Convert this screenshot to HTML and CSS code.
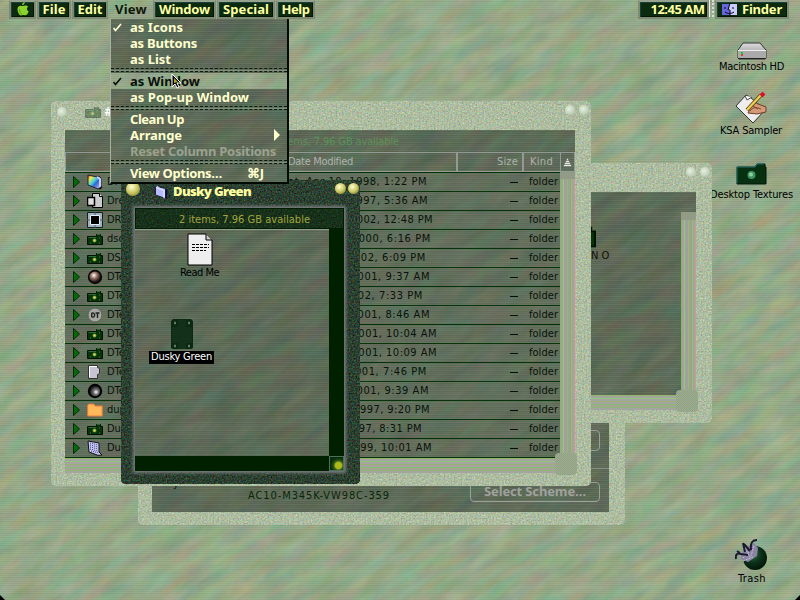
FILE: index.html
```html
<!DOCTYPE html>
<html lang="en">
<head>
<meta charset="utf-8">
<title>Finder</title>
<link rel="stylesheet" href="styles.css">
</head>
<body>
<svg class="defs" width="0" height="0">
  <defs>
    <filter id="moss" x="0" y="0" width="100%" height="100%" color-interpolation-filters="sRGB">
      <feTurbulence type="fractalNoise" baseFrequency="0.028 0.08" numOctaves="4" seed="7"/>
      <feColorMatrix values=".24 .03 0 0 .455  0 .15 0 0 .59  0 .08 .14 0 .43  0 0 0 0 1"/>
    </filter>
    <filter id="shade" x="0" y="0" width="100%" height="100%" color-interpolation-filters="sRGB">
      <feTurbulence type="fractalNoise" baseFrequency="0.028 0.08" numOctaves="4" seed="4"/>
      <feColorMatrix values=".14 .02 0 0 .28  0 .11 0 0 .355  0 .05 .08 0 .275  0 0 0 0 1"/>
    </filter>
    <filter id="pale" x="0" y="0" width="100%" height="100%" color-interpolation-filters="sRGB">
      <feTurbulence type="fractalNoise" baseFrequency="0.6" numOctaves="3" seed="3"/>
      <feColorMatrix values=".42 .1 0 0 .42  0 .36 0 0 .56  0 .12 .4 0 .37  0 0 0 0 1"/>
    </filter>
    <filter id="dusk" x="0" y="0" width="100%" height="100%" color-interpolation-filters="sRGB">
      <feTurbulence type="fractalNoise" baseFrequency="0.6" numOctaves="3" seed="9"/>
      <feColorMatrix values=".5 0 0 0 -.08  0 .5 0 0 0  0 .15 .45 0 -.11  0 0 0 0 1"/>
    </filter>
    <linearGradient id="metal" x1="0" y1="0" x2="0" y2="1"><stop offset="0" stop-color="#ddd"/><stop offset="1" stop-color="#888"/></linearGradient>
    <radialGradient id="ball" cx=".4" cy=".35" r=".6"><stop offset="0" stop-color="#fff"/><stop offset=".45" stop-color="#9a7a6c"/><stop offset="1" stop-color="#1c1210"/></radialGradient>
    <radialGradient id="ball2" cx=".6" cy=".6" r=".6"><stop offset="0" stop-color="#fff"/><stop offset=".4" stop-color="#777"/><stop offset="1" stop-color="#111"/></radialGradient>
    <radialGradient id="orb" cx=".4" cy=".35" r=".7"><stop offset="0" stop-color="#2d7144"/><stop offset=".5" stop-color="#0b3219"/><stop offset="1" stop-color="#021206"/></radialGradient>
    <linearGradient id="rainbow" x1="0" y1="0" x2="1" y2="1"><stop offset="0" stop-color="#e33"/><stop offset=".2" stop-color="#ee4"/><stop offset=".45" stop-color="#4cd"/><stop offset=".6" stop-color="#36c"/><stop offset="1" stop-color="#ccf"/></linearGradient>
    <symbol id="camera" viewBox="0 0 16 12"><path d="M.5 3.500h9v-2h4v2h2v8H.5z" fill="#063408" stroke="#010"/><path d="M1.500 4.500H9M10 1.500h3" stroke="#2b6a35"/><circle cx="7.500" cy="7.500" r="2" fill="#5f8a2c"/><path d="M6.500 6.500h2v2h-2z" fill="#e8e070"/><path d="M3 10h1M12 10h1M12 5h1" stroke="#3e8540"/></symbol>
    <symbol id="pages" viewBox="0 0 16 16"><path d="M5.500.5h7l3 3v11h-10z" fill="#ccc" stroke="#000"/><path d="M12.500.5v3h3" fill="#fff" stroke="#000"/><path d="M.5 4.500h7v8h-7z" fill="#ddd" stroke="#000" stroke-width="1.500"/></symbol>
    <symbol id="frame" viewBox="0 0 16 16"><path d="M.5.5h15v15H.5z" fill="#9eb1bf" stroke="#151d22"/><path d="M8 0v16M0 8h16" stroke="#4a5a68"/><path d="M3.500 3.500h9v9h-9z" fill="#000" stroke="#e3edf5"/></symbol>
    <symbol id="prism" viewBox="0 0 16 16"><path d="M1 1l9 2 2-1 2 2v10l-3 1-10-4z" fill="url(#rainbow)" stroke="#223"/><path d="M10 3l3 2v9" stroke="#ccf" stroke-width="2" fill="none"/><path d="M12 15l3-2" stroke="#111" stroke-width="2"/></symbol>
    <symbol id="bronze" viewBox="0 0 16 16"><circle cx="8" cy="8" r="7.200" fill="#0c0808"/><circle cx="8" cy="8" r="5.600" fill="url(#ball)"/></symbol>
    <symbol id="silver" viewBox="0 0 16 16"><circle cx="8" cy="8" r="7.200" fill="#000"/><circle cx="8" cy="8" r="5.200" fill="url(#ball2)"/></symbol>
    <symbol id="coin" viewBox="0 0 16 16"><circle cx="8" cy="8" r="7" fill="#a5a8a0" stroke="#5c6058"/><path d="M4.700 5.700v4.600M5 6c3.500-.8 3.500 5 0 4M8.500 6h4M10.500 6v5" stroke="#222" stroke-width="1.400" fill="none"/></symbol>
    <symbol id="tag" viewBox="0 0 16 16"><path d="M1.500 1.500h9v2l2 1v5l-2 1v4h-9z" fill="#c7c5d2" stroke="#333"/><path d="M2.500 13V2.500H10" stroke="#fff" fill="none"/></symbol>
    <symbol id="folder" viewBox="0 0 16 14"><path d="M.7 2.500l1-1.500h5l1.500 2h7v10H.7z" fill="#ffb95c" stroke="#f07838"/></symbol>
    <symbol id="slant" viewBox="0 0 16 16"><path d="M1 1l11 2v9l3 3-4 .3L2 12z" fill="#ccf" stroke="#111"/><path d="M3 3l8 2M3 5l8 2M3 7l8 2M3 9l8 2M4 11l8 2" stroke="#336" stroke-dasharray="1 1"/></symbol>
    <symbol id="bluefolder" viewBox="0 0 14 16"><path d="M1.500 3l2-2 2 2 6 1.500v10L1.500 11z" fill="#b4bcff" stroke="#223"/><path d="M2 3.500l8 3v8" stroke="#eef" fill="none"/><path d="M12.500 5v10" stroke="#0b1030" stroke-width="1.500"/></symbol>
  </defs>
</svg>

<div class="desktop">
  <div class="tex diag"><svg><rect width="100%" height="100%" filter="url(#moss)"/></svg></div>

  <header class="menubar">
    <div class="mb-btn apple"><svg width="15" height="15" viewBox="0 0 17 17"><path d="M11 0c0 2-1 3.500-3 3.500C8 2 9 .5 11 0zM4 5c2-1.500 3.500-.5 5-.5s4-1.500 6 1c-2 1-2 4 .5 5-1 3-2.500 5-4.500 4.500-1.500-.5-2-.5-3 0C4.500 16.500 1 8 4 5z" fill="#8bd22e"/><path d="M5 8c0 3 1 5 3 6" stroke="#4c9613" fill="none"/></svg></div>
    <div class="mb-btn file"><span data-w="23">File</span></div>
    <div class="mb-btn edit"><span data-w="25">Edit</span></div>
    <div class="mb-btn view"><span data-w="32">View</span></div>
    <div class="mb-btn window-m"><span data-w="51">Window</span></div>
    <div class="mb-btn special"><span data-w="46">Special</span></div>
    <div class="mb-btn help"><span data-w="28">Help</span></div>
    <div class="mb-btn clock"><span data-w="54">12:45 AM</span></div>
    <div class="mb-grip"></div>
    <div class="mb-btn finder"><svg width="15" height="14" viewBox="0 0 15 14"><path d="M0 1h15v11H0z" fill="#ccf"/><path d="M0 1h7v5H6v2h2v4H0z" fill="#66d"/><path d="M8 0L6 7h2v6M3 4v2M11 4v2M3 9c3 2 6 2 9 0" fill="none" stroke="#001"/></svg><span data-w="40">Finder</span></div>
  </header>

  <section class="win settings">
    <div class="tex"><svg><rect width="100%" height="100%" filter="url(#pale)"/></svg></div>
    <div class="pane">
      <div class="tex diag"><svg><rect width="100%" height="100%" filter="url(#shade)"/></svg></div>
      <div class="ghost-btn short"></div>
      <div class="rule"></div>
      <div class="serial-row">
        <span class="cut">y</span>
        <span class="serial" data-w="142">AC10-M345K-VW98C-359</span>
        <div class="ghost-btn scheme"><span data-w="102">Select Scheme…</span></div>
      </div>
    </div>
  </section>

  <section class="win textures">
    <div class="tex"><svg><rect width="100%" height="100%" filter="url(#pale)"/></svg></div>
    <div class="knobs"><i></i><i></i></div>
    <div class="pane">
      <div class="tex diag"><svg><rect width="100%" height="100%" filter="url(#shade)"/></svg></div>
      <div class="view-area"><svg class="cut-cam" width="30" height="24"><use href="#camera"/></svg><span class="cut-label">N O</span></div>
      <div class="vbar"></div>
      <div class="hbar"></div>
      <div class="corner"></div>
    </div>
  </section>

  <section class="win listing">
    <div class="tex"><svg><rect width="100%" height="100%" filter="url(#pale)"/></svg></div>
    <div class="titlebar"><i class="knob"></i><svg class="dim" width="16" height="12"><use href="#camera"/></svg><b>#</b><div class="knobs"><i></i><i></i></div></div>
    <div class="pane">
      <div class="tex diag"><svg><rect width="100%" height="100%" filter="url(#shade)"/></svg></div>
      <div class="info"><span data-w="118">items, 7.96 GB available</span></div>
      <div class="cols">
        <div class="c-name"></div><div class="c-date"><span data-w="65">Date Modified</span></div>
        <div class="c-size"><span data-w="21">Size</span></div><div class="c-kind"><span data-w="23">Kind</span></div>
        <div class="c-sort"><svg width="9" height="9" viewBox="0 0 9 9"><path d="M4 1h1v1H4zM3 3h3v1H3zM2 5h5v1H2zM1 7h7v1H1z" fill="#e4e4e4" stroke="#e4e4e4" stroke-width=".4"/></svg></div>
      </div>
      <div class="list"><div class="rows" id="rows"></div><div class="vbar"></div></div>
      <div class="hbar"></div>
      <div class="corner"></div>
    </div>
  </section>

  <section class="win dusky">
    <div class="tex"><svg><rect width="100%" height="100%" filter="url(#dusk)"/></svg></div>
    <div class="titlebar"><i class="knob"></i><svg width="14" height="16"><use href="#bluefolder"/></svg><b data-w="78">Dusky Green</b><div class="knobs"><i></i><i></i></div></div>
    <div class="pane">
      <div class="info"><div class="tex"><svg><rect width="100%" height="100%" filter="url(#dusk)"/></svg></div><span data-w="131">2 items, 7.96 GB available</span></div>
      <div class="body">
        <div class="canvas">
          <div class="tex diag"><svg><rect width="100%" height="100%" filter="url(#shade)"/></svg></div>
          <div class="item readme"><svg width="26" height="33" viewBox="0 0 26 33"><path d="M1 1h18l6 6v25H1z" fill="#eee" stroke="#000"/><path d="M19 1v6h6" fill="#ccc" stroke="#000"/><path d="M5 11.500h17M5 14.500h17M5 17.500h14" stroke="#000" stroke-dasharray="3 1"/></svg><span data-w="39">Read Me</span></div>
          <div class="item suite"><svg width="22" height="31" viewBox="0 0 22 31"><path d="M2 0h18l2 2v27l-2 1H2l-2-1V2z" fill="#0c2712"/><path d="M7 1h8v29H7zM1 8h20v16H1z" fill="#12301a"/><path d="M3 4h2M17 4h2M3 27h2M17 27h2" stroke="#5f7b60" stroke-width="2.500"/></svg><span class="sel"><span data-w="61">Dusky Green</span></span></div>
        </div>
        <div class="dark-v"></div>
      </div>
      <div class="dark-h"><div class="grow"></div></div>
    </div>
  </section>

  <div class="dicon hd"><svg width="32" height="18" viewBox="0 0 32 18"><path d="M7 1h17l6 7v8l-1 1H3l-1-1V8z" fill="url(#metal)" stroke="#333"/><path d="M2 8h28v8H2z" fill="#aaa"/><path d="M2 8.500h28" stroke="#eee"/><path d="M5 11h2" stroke="#2c2" stroke-width="2"/><path d="M5 13h2" stroke="#d22" stroke-width="1.500"/><path d="M2 16.500h28" stroke="#222"/></svg><span data-w="65">Macintosh HD</span></div>
  <div class="dicon ksa"><svg width="34" height="32" viewBox="0 0 34 32"><path d="M2 14L12 3l4 2 15 13-12 13z" fill="#eee" stroke="#333"/><path d="M11 4l2 4 5-3" fill="#fff" stroke="#444"/><path d="M15 19c-1-5 6-10 9-7l8 3v5l-9 2-9-1z" fill="#d39a78" stroke="#6f3f2a"/><path d="M13 18L27 3" stroke="#5d4410" stroke-width="4"/><path d="M13 18L27 3" stroke="#f0cf55" stroke-width="2.300"/><path d="M27 4l3-3" stroke="#d9112c" stroke-width="4"/><path d="M16 19c3-4 6-4 11-2M19 14l5 3" stroke="#7a4630" fill="none"/></svg><span data-w="62">KSA Sampler</span></div>
  <div class="dicon dtex"><svg width="32" height="24" viewBox="0 0 32 24"><path d="M1 5h18l2-3h8v3h1v17H1z" fill="#06300f" stroke="#01160a"/><path d="M1 21V5h18l2-3h7" stroke="#287a72" fill="none"/><circle cx="15.500" cy="13" r="4" fill="#3b9462"/><circle cx="15" cy="12.500" r="2" fill="#8fcf9b"/></svg><span data-w="83">Desktop Textures</span></div>
  <div class="dicon trash"><svg width="34" height="34" viewBox="0 0 34 34"><circle cx="20" cy="20" r="12" fill="url(#orb)"/><path d="M6 17l4-7 9-5 4 5-1 8-9 6-7-3z" fill="#8b83a2"/><path d="M8 20l6-6M10 10l5 9M19 8l-3 10M8 23l10-4" stroke="#c9c1d8" stroke-dasharray="2 1"/><path d="M1 21c-1-6 3-6 5-5l7 1M10 14L8 5M9 6l6 7M16 12c-1-8 2-10 6-10M5 15l-3-2" stroke="#1c1a30" stroke-width="2" fill="none"/></svg><span data-w="28">Trash</span></div>

  <nav class="menu">
    <div class="tex diag"><svg><rect width="100%" height="100%" filter="url(#shade)"/></svg></div>
    <div class="mi"><i class="tick"><svg width="9" height="9" viewBox="0 0 9 9"><path d="M.5 5l2 2.500L8 1" fill="none" stroke="currentColor" stroke-width="1.700"/></svg></i><span data-w="53">as Icons</span></div>
    <div class="mi"><i class="tick"></i><span data-w="67">as Buttons</span></div>
    <div class="mi"><i class="tick"></i><span data-w="41">as List</span></div>
    <div class="sep"></div>
    <div class="mi on"><div class="tex diag"><svg><rect width="100%" height="100%" filter="url(#moss)"/></svg></div><i class="tick"><svg width="9" height="9" viewBox="0 0 9 9"><path d="M.5 5l2 2.500L8 1" fill="none" stroke="currentColor" stroke-width="1.700"/></svg></i><span data-w="70">as Window</span></div>
    <div class="mi"><i class="tick"></i><span data-w="119">as Pop-up Window</span></div>
    <div class="sep"></div>
    <div class="mi"><i class="tick"></i><span data-w="54">Clean Up</span></div>
    <div class="mi"><i class="tick"></i><span data-w="52">Arrange</span><svg class="sub" width="6" height="12" viewBox="0 0 6 12"><path d="M0 0l6 6-6 6z" fill="#ffffcf"/></svg></div>
    <div class="mi off"><i class="tick"></i><span data-w="146">Reset Column Positions</span></div>
    <div class="sep"></div>
    <div class="mi"><i class="tick"></i><span data-w="92">View Options…</span><span class="key" data-w="17">⌘J</span></div>
  </nav>
  <svg class="pointer" width="11" height="16" viewBox="0 0 11 16"><path d="M1 1v13l3-3 2 4 2-1-2-4h4z" fill="#000" stroke="#fff"/><path d="M3 5v5l4-1z" fill="#a8a820"/></svg>
  <i class="nick left"></i><i class="nick right"></i>
</div>
<script src="script.js"></script>
</body>
</html>
```
FILE: styles.css
```css
* { box-sizing: border-box; }
body { margin: 0; background: #8ea285; font: 11px/14px "DejaVu Sans Condensed", "DejaVu Sans", sans-serif; color: #0a120a; }
.defs { position: absolute; }
.desktop { position: relative; width: 800px; height: 600px; overflow: hidden; }
[data-w] { white-space: nowrap; display: inline-block; }
svg { display: block; flex: none; }

.tex { position: absolute; inset: 0; overflow: hidden; border-radius: inherit; }
.tex svg { width: 100%; height: 100%; }
.tex.diag svg { position: absolute; left: 50%; top: 50%; width: 1040px; height: 1040px; margin: -520px 0 0 -520px; transform: rotate(-32deg); }
.tex.diag::after { content: ""; position: absolute; inset: 0; background: repeating-linear-gradient(#b4cf9a18 0 1px, #233a2014 1px 2px, #ffffff08 2px 3px, #233a200c 3px 4px); }
.tex ~ * { position: relative; }

.menubar { display: flex; height: 20px; padding-left: 9px; font: bold 13px/15px "Noto Sans", "Open Sans", sans-serif; color: #ffffa4; }
.mb-btn { height: 19px; border: 2px solid #7f8a72; border-top-color: #97a38c; background: #0b2a0e; box-shadow: inset 1px 1px #173f3c, inset -1px -1px #031603; display: flex; justify-content: center; align-items: center; }
.mb-btn.apple { width: 27px; }
.mb-btn.file { width: 34px; margin-left: 1px; }
.mb-btn.edit { width: 36px; margin-left: 1px; }
.mb-btn.view { width: 43px; background: none; border: 0; box-shadow: none; color: #0d190b; padding-left: 1px; margin-left: 1px; }
.mb-btn.window-m { width: 63px; margin-left: 1px; }
.mb-btn.special { width: 58px; margin-left: 1px; }
.mb-btn.help { width: 39px; margin-left: 1px; }
.mb-btn.clock { width: 71px; margin-left: auto; padding-left: 8px; }
.mb-grip { width: 5px; height: 17px; border-left: 1px solid #eee; border-right: 2px dotted #ddd; }
.mb-btn.finder { width: 74px; margin: 0 11px 0 1px; gap: 5px; }

.win { position: absolute !important; border-radius: 5px; }
.win > .tex { box-shadow: inset 1px 1px #c8d2b740, inset -1px -1px #66775a80; }
.win .pane { position: absolute; }
.settings { left: 138px; top: 300px; width: 487px; height: 225px; }
.settings .pane { left: 14px; top: 20px; width: 457px; height: 192px; display: flex; flex-direction: column; align-items: flex-end; }
.ghost-btn { border: 1px solid #9b9f99; border-radius: 4px; height: 21px; width: 130px; margin-right: 9px; }
.ghost-btn.short { margin-top: 110px; flex: none; }
.rule { height: 1px; width: 100%; background: #8b918a; margin-top: 17px; }
.serial-row { display: flex; margin-top: 13px; width: 100%; height: 20px; }
.cut { width: 96px; padding-left: 21px; line-height: 4px; }
.serial { color: #08270a; line-height: 27px; }
.scheme { height: 20px; margin-left: auto; font: bold 13px/17px "Noto Sans", sans-serif; color: #a0a29d; text-align: center; }

.win.textures { left: 480px; top: 163px; width: 232px; height: 260px; }
.textures .pane { left: 14px; top: 29px; width: 202px; height: 218px; }
.textures .view-area { height: 203px; padding: 32px 0 0 72px; }
.cut-label { display: block; padding-left: 25px; margin-top: 1px; }
.vbar { width: 15px; background: linear-gradient(90deg, #8bb65b 0 1px, #a2a39f 1px 3px, #8fce79 3px 4px, #a29f9f 4px 7px, #9ab772 7px 8px, #a29f9f 8px 9px, #8ab07c 9px 10px, #a99d79 10px 11px, #8fc07f 11px 12px, #a2a29f 12px 14px, #cf9a94 14px); }
.hbar { height: 15px; background: linear-gradient(#91b469 0 1px, #a4a4a0 1px 3px, #8fc67a 3px 4px, #a6a4a2 4px 6px, #99b26f 6px 7px, #a6a3a2 7px 9px, #84bc70 9px 10px, #a6a494 10px 12px, #8fb672 12px 13px, #a4a4a0 13px); }
.textures .pane > .vbar { position: absolute; right: 0; top: 20px; bottom: 15px; border-top: 8px solid #929b86; }
.corner { position: absolute !important; right: -2px; bottom: -2px; width: 22px; height: 22px; border-radius: 4px; background: repeating-conic-gradient(#93b488 0 25%, #9c9a8a 0 50%) 0 0 / 2px 2px; }

.win.listing { left: 51px; top: 101px; width: 540px; height: 385px; }
.listing .pane { left: 14px; top: 29px; width: 510px; height: 343px; }
.titlebar { display: flex; align-items: center; height: 22px; }
.listing .titlebar { padding-left: 6px; }
.knob, .knobs i { width: 10px; height: 10px; border-radius: 50%; background: radial-gradient(circle at 40% 40%, #e7efdf, #c3d3bc 55%, #a2b59b); }
.listing .dim { opacity: .4; margin-left: 18px; }
.listing .titlebar b { color: #fff; margin-left: 3px; font-size: 12px; }
.knobs { display: flex; gap: 4px; }
.listing .titlebar .knobs { margin-left: auto; padding-right: 2px; align-self: flex-start; padding-top: 4px; }
.textures .knobs { position: absolute; right: 2px; top: 4px; }
.listing .info { height: 22px; padding: 5px 0 0 216px; color: #599257; }
.cols { display: flex; height: 20px; border: 1px solid #939993; color: #aeb2ad; line-height: 18px; }
.c-name { width: 222px; } .c-date { width: 170px; border-right: 2px solid #939993; }
.c-size { width: 66px; border-right: 2px solid #939993; text-align: right; padding-right: 4px; } .c-kind { width: 36px; padding-left: 6px; }
.c-sort { border-left: 1px solid #939993; flex: 1; display: grid; place-items: center; }
.list { display: flex; height: 286px; }
.rows { width: 495px; border-top: 1px solid #06330a; }
.list .vbar { border-top: 7px solid #929b86; }
.row { display: flex; align-items: center; height: 19px; border-bottom: 1px solid #06330a; background: #7e8b7a28; position: relative; }
.row .tri { margin: 0 7px 0 8px; }
.row .name { width: 70px; margin-left: 4px; }
.row .date { text-align: right; }
.row .dash { position: absolute; left: 445px; top: 9px; width: 8px; height: 1px; background: #071007; }
.row .kind { position: absolute; left: 464px; top: 2px; }

.win.dusky { left: 121px; top: 180px; width: 239px; height: 304px; background: #14301a; }
.dusky > .tex { box-shadow: inset 1px 1px #0b250d, inset -1px -1px #031004; }
.dusky .titlebar { color: #ffffa0; font: bold 13px/20px "Noto Sans", sans-serif; padding-left: 5px; }
.dusky .knob, .dusky .knobs i { background: radial-gradient(circle at 40% 35%, #ffffd0, #c9c560 50%, #5c6327); width: 11px; height: 11px; }
.dusky .knob { width: 14px; height: 14px; margin-top: -4px; }
.dusky .titlebar svg { margin: 2px 5px 0 14px; }
.dusky .titlebar b { margin-top: -1px; }
.dusky .knobs { margin-left: auto; gap: 2px; padding: 0 1px 5px 0; }
.dusky .pane { left: 14px; top: 28px; width: 209px; height: 263px; box-shadow: 0 0 3px 2px #7a7d7e; background: #002000; }
.dusky .info { height: 21px; color: #a2a53c; padding: 4px 0 0 43px; border: 1px solid #011d01; position: relative; }
.dusky .info .tex { opacity: .55; }
.dusky .body { display: flex; height: 227px; }
.canvas { position: relative; width: 194px; overflow: hidden; border-top: 1px solid #8f988a; }
.dark-v { width: 15px; background: #002000; }
.dark-h { height: 15px; background: #002000; display: flex; justify-content: flex-end; }
.grow { width: 15px; border: 1px solid #4c705b; background: radial-gradient(circle at 65% 65%, #acb91b 0 3px, #285315 5px, #062c0b 8px); }
.item { display: flex; flex-direction: column; align-items: center; position: absolute !important; }
.readme { left: 45px; top: 3px; color: #000; }
.suite { left: 14px; top: 89px; gap: 1px; }
.sel { background: #000; color: #fff; padding: 0 2px; height: 13px; line-height: 12px; }

.dicon { position: absolute !important; display: flex; flex-direction: column; align-items: center; color: #000; }
.hd { left: 719px; top: 42px; } .ksa { left: 720px; top: 92px; }
.dtex { left: 710px; top: 162px; } .trash { left: 735px; top: 538px; }
.dtex span { clip-path: inset(0 0 0 2px); margin-top: 2px; }
.hd span { margin-top: 0; } .ksa span { margin-top: 0; }

.menu { position: absolute !important; left: 110px; top: 19px; width: 179px; height: 165px; padding-top: 0; border: 1px solid #010a01; border-width: 0 2px 2px 1px; border-left-color: #a7b09f; color: #ffffcf; font: bold 13px/16px "Noto Sans", "Open Sans", sans-serif; }
.mi { height: 16px; display: flex; position: relative; }
.mi > .tick { width: 19px; padding: 4px 0 0 2px; flex: none; }
.mi.on { color: #081008; }
.mi.off { color: #9ca18f; }
.sub { margin: 2px 7px 0 auto; }
.key { margin: 0 23px 0 auto; }
.sep { height: 4px; margin: 1px 0; border-top: 1px dashed #071c0a; border-bottom: 1px dashed #071c0a; background: #838d80; background-clip: content-box; padding-top: 1px; }
.pointer { position: absolute !important; left: 171px; top: 73px; }
.nick { position: absolute !important; bottom: 0; width: 0; height: 0; border: 5px solid transparent; border-top: 0; border-bottom-color: #000; }
.nick.left { left: -5px; } .nick.right { right: -5px; }
```
FILE: script.js
```js
// name, icon, modified date, right end of the date column text
const files = [
  ["Di", "prism", "Sat, Apr 10, 1998, 1:22 PM", 362],
  ["Dreams", "pages", "Sun, Jun 1, 1997, 5:36 AM", 363],
  ["DR", "frame", "Mon, Jan 7, 2002, 12:48 PM", 368],
  ["dso", "camera", "Sat, Jan 8, 2000, 6:16 PM", 366],
  ["DS2", "camera", "Tue, Jan 8, 2002, 6:09 PM", 361],
  ["DTe", "bronze", "Fri, May 4, 2001, 9:37 AM", 365],
  ["DTe", "camera", "Tue, Jan 8, 2002, 7:33 PM", 358],
  ["DTe", "coin", "Fri, May 4, 2001, 8:46 AM", 365],
  ["DTe", "camera", "Fri, May 4, 2001, 10:04 AM", 372],
  ["DTe", "camera", "Fri, May 4, 2001, 10:09 AM", 372],
  ["DTe", "tag", "Fri, May 4, 2001, 7:46 PM", 362],
  ["DTe", "silver", "Fri, May 4, 2001, 9:39 AM", 364],
  ["dup", "folder", "Mon, Jun 2, 1997, 9:20 PM", 365],
  ["Dus", "camera", "Mon, Jun 2, 1997, 8:31 PM", 357],
  ["Dus", "slant", "Tue, Jun 1, 1999, 10:01 AM", 367]
];
document.getElementById("rows").innerHTML = files.map(([name, icon, date, end]) => {
  const h = icon === "camera" ? 12 : icon === "folder" ? 14 : 16;
  return `<div class="row"><svg class="tri" width="7" height="12" viewBox="0 0 7 12"><path d="M.5.5l6 5.500-6 5.500z" fill="#066a0b" stroke="#022a04"/></svg>` +
    `<svg width="16" height="${h}"><use href="#${icon}"/></svg><span class="name">${name}</span>` +
    `<span class="date" style="width:${end - 112}px"><span data-w="${date.length * 5.6}">${date}</span></span><i class="dash"></i><span class="kind" data-w="29">folder</span></div>`;
}).join("");

// Track each label to its bitmap-font width.
document.querySelectorAll("[data-w]").forEach(el => {
  const gap = (el.dataset.w - el.getBoundingClientRect().width) / el.textContent.length;
  el.style.letterSpacing = gap + "px";
});
```
